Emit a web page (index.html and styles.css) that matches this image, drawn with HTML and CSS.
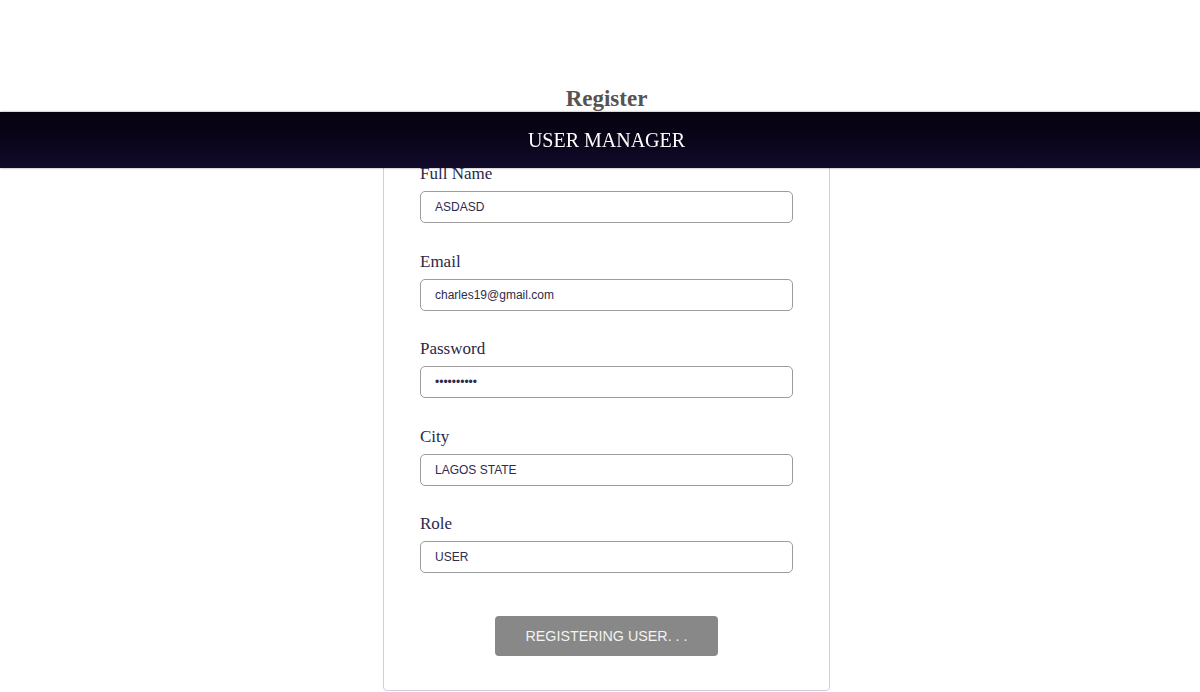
FILE: index.html
```html
<!DOCTYPE html>
<html lang="en">
<head>
<meta charset="utf-8">
<title>User Manager - Register</title>
<link rel="stylesheet" href="styles.css">
</head>
<body>
<header class="topbar">
  <div class="topbar-title">USER MANAGER</div>
</header>
<main class="page">
  <h2 class="page-title">Register</h2>
  <form class="card">
    <div class="field">
      <label class="field-label" for="name">Full Name</label>
      <input class="field-input" id="name" type="text" value="ASDASD">
    </div>
    <div class="field">
      <label class="field-label" for="email">Email</label>
      <input class="field-input" id="email" type="text" value="charles19@gmail.com">
    </div>
    <div class="field">
      <label class="field-label" for="password">Password</label>
      <input class="field-input" id="password" type="password" value="abcdefghij">
    </div>
    <div class="field">
      <label class="field-label" for="city">City</label>
      <input class="field-input" id="city" type="text" value="LAGOS STATE">
    </div>
    <div class="field">
      <label class="field-label" for="role">Role</label>
      <input class="field-input" id="role" type="text" value="USER">
    </div>
    <div class="actions">
      <button class="submit-btn" type="button">REGISTERING USER. . .</button>
    </div>
  </form>
</main>
</body>
</html>
```
FILE: styles.css
```css
html, body {
  margin: 0;
  padding: 0;
  background: #ffffff;
}

body {
  font-family: "Liberation Serif", "Times New Roman", serif;
  overflow: hidden;
}

.topbar {
  position: fixed;
  top: 112px;
  left: 0;
  right: 0;
  height: 56px;
  background: linear-gradient(180deg, #050210 0%, #0a0519 50%, #120a2c 100%);
  box-shadow: 0 0 2px rgba(0, 0, 0, 0.45);
  display: flex;
  align-items: center;
  justify-content: center;
  padding-left: 13px;
  z-index: 10;
}

.topbar-title {
  color: #ffffff;
  font-size: 20px;
  letter-spacing: 0;
}

.page {
  display: flex;
  flex-direction: column;
  align-items: center;
  padding-top: 85px;
  padding-left: 13px;
}

.page-title {
  margin: 0;
  font-size: 23px;
  line-height: 28px;
  font-weight: bold;
  color: #575350;
}

.card {
  margin-top: 20px;
  width: 447px;
  box-sizing: border-box;
  border: 1px solid #cfcde3;
  border-radius: 4px;
  padding: 30px 36px 34px;
  display: flex;
  flex-direction: column;
}

.field {
  display: flex;
  flex-direction: column;
  gap: 7px;
  margin-bottom: 28.5px;
}

.field-label {
  font-size: 17px;
  line-height: 20px;
  color: #2a2848;
}

.field-input {
  height: 32px;
  box-sizing: border-box;
  border: 1px solid #9c9c9c;
  border-radius: 5px;
  padding: 0 14px;
  font-family: "Liberation Sans", Arial, sans-serif;
  font-size: 12px;
  color: #2e2b4e;
  background: #ffffff;
  outline: none;
}

.actions {
  display: flex;
  justify-content: center;
  padding-top: 14px;
}

.submit-btn {
  width: 223px;
  height: 40px;
  border: none;
  border-radius: 4px;
  background: #888888;
  color: #f2f2f2;
  font-family: "Liberation Sans", Arial, sans-serif;
  font-size: 14.3px;
  cursor: default;
}
```
